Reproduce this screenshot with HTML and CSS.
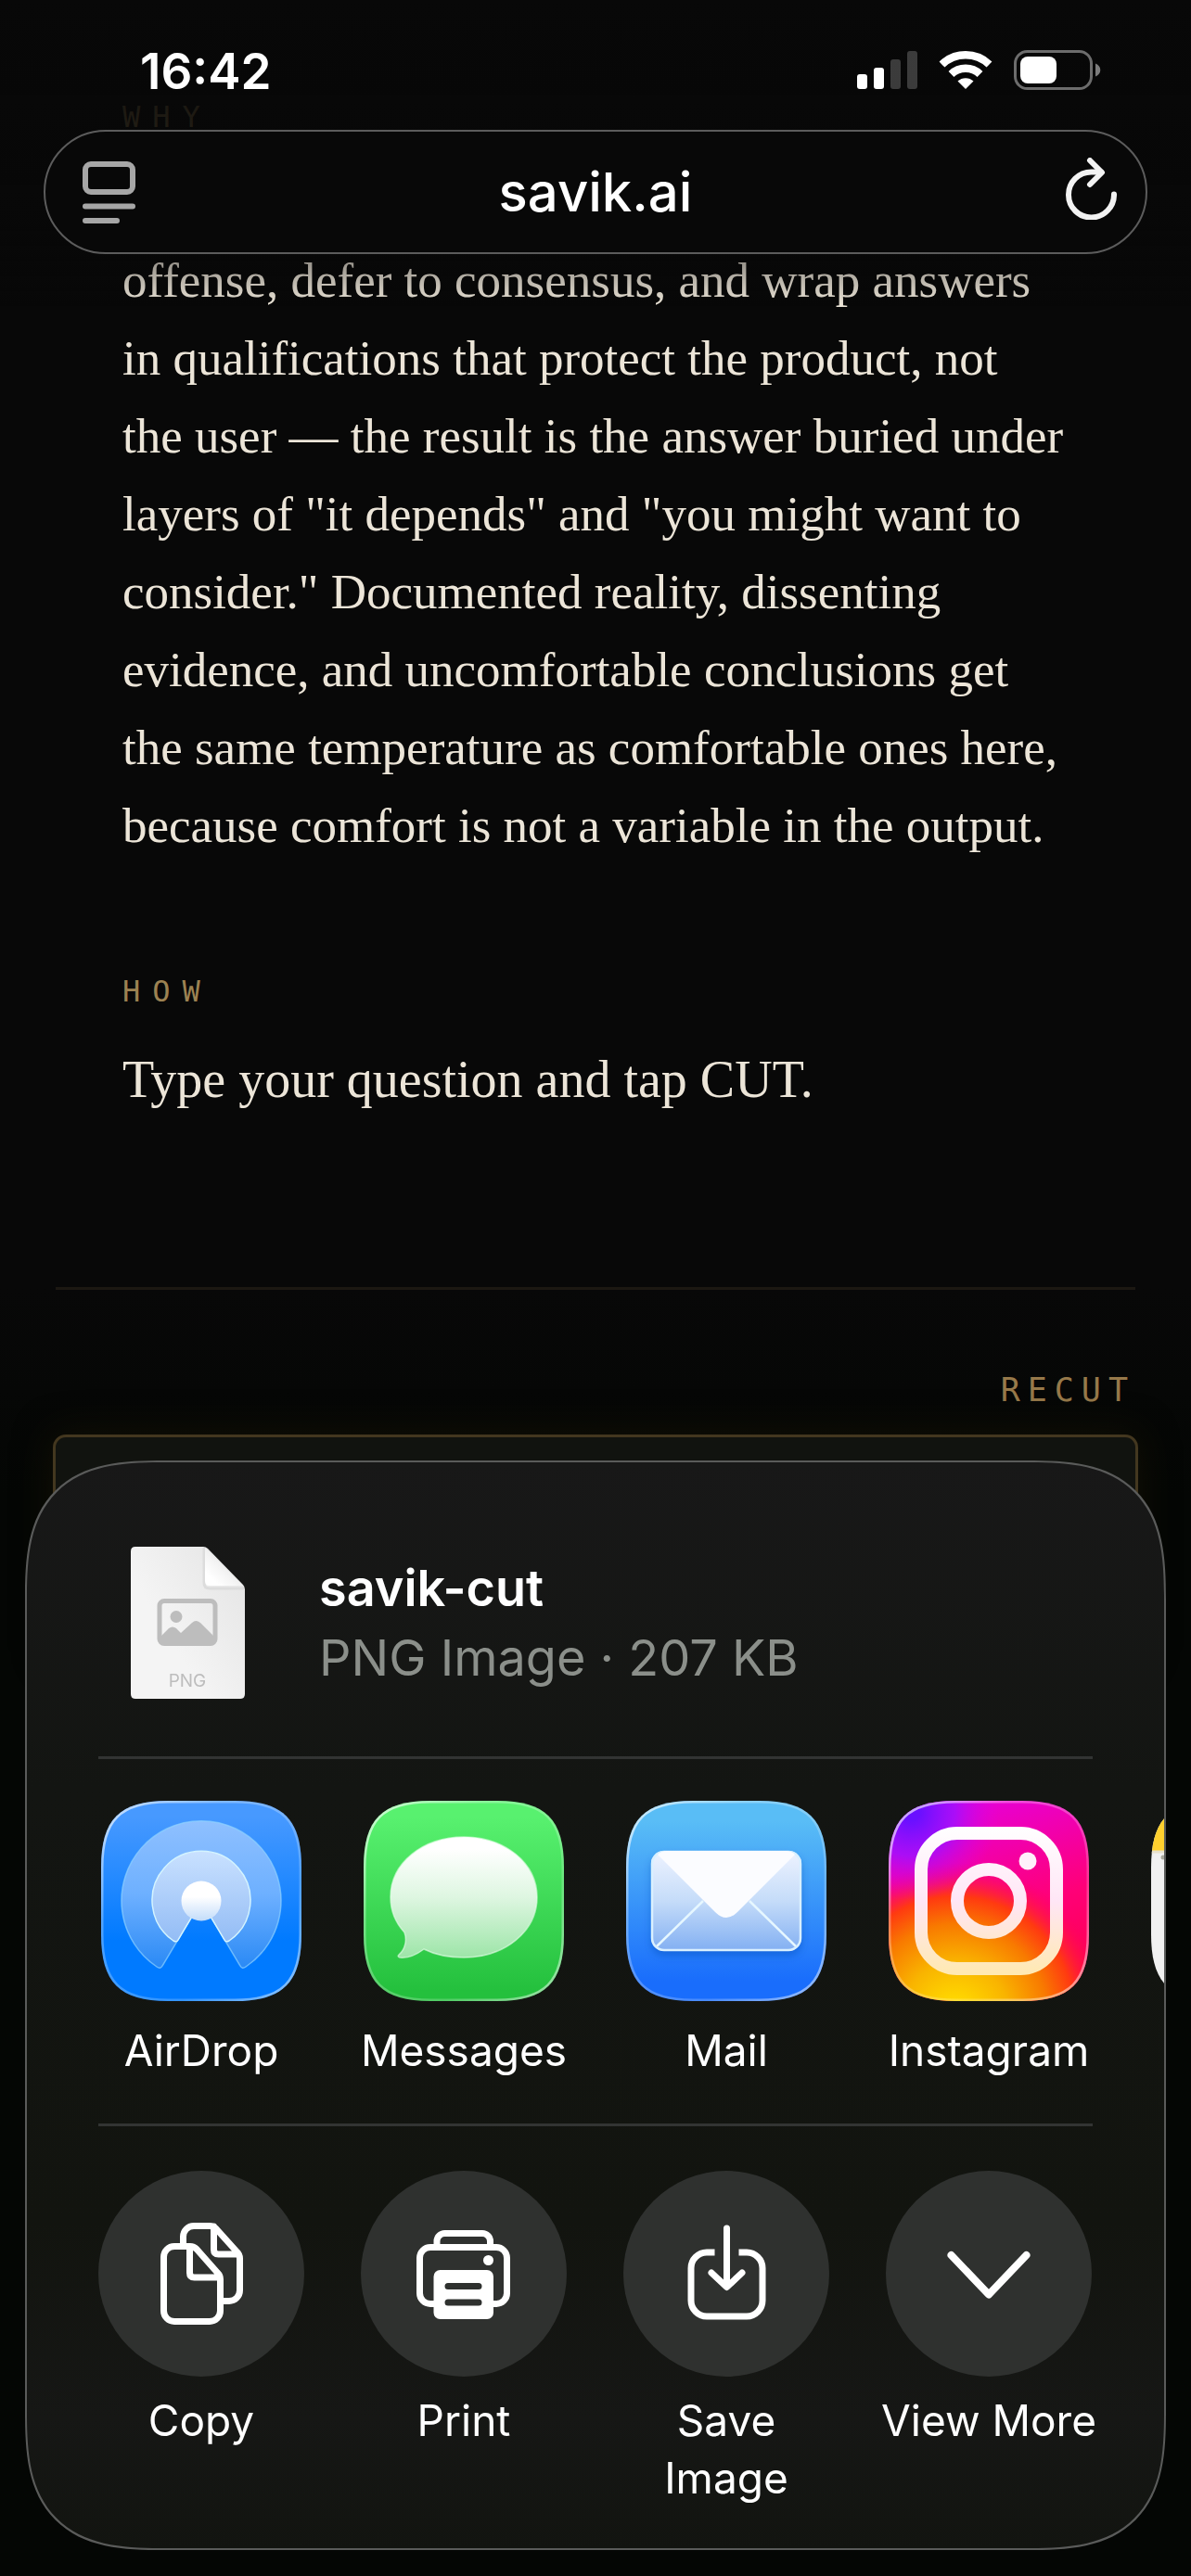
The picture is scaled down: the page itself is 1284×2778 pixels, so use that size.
FILE: index.html
```html
<!DOCTYPE html>
<html lang="en">
<head>
<meta charset="utf-8">
<meta name="viewport" content="width=device-width">
<title>savik.ai</title>
<link rel="stylesheet" href="styles.css">
</head>
<body>
<header class="top">
  <div class="status">
    <span class="time">16:42</span>
    <div class="status-icons">
      <svg width="65" height="43" viewBox="0 0 65 43" fill="#fff" aria-hidden="true">
        <rect x="0" y="26" width="11" height="16" rx="3"/>
        <rect x="18" y="19" width="11" height="23" rx="3"/>
        <rect x="36" y="10" width="11" height="32" rx="3" opacity=".21"/>
        <rect x="54" y="1" width="11" height="41" rx="3" opacity=".21"/>
      </svg>
      <svg width="58" height="43" viewBox="0 0 58 43" fill="none" stroke="#fff" aria-hidden="true">
        <path d="M3.500 15.500A37 37 0 0 1 54.500 15.500" stroke-width="8.500"/>
        <path d="M13.500 26A22.500 22.500 0 0 1 44.500 26" stroke-width="8.500"/>
        <path d="M29 42L20.500 33.500A12.500 12.500 0 0 1 37.500 33.500Z" fill="#fff" stroke="none"/>
      </svg>
      <svg width="94" height="43" viewBox="0 0 94 43" aria-hidden="true">
        <rect x="1.500" y="1.500" width="82" height="40" rx="13" fill="none" stroke="#6c6c6c" stroke-width="3"/>
        <rect x="7" y="7" width="39" height="29" rx="8" fill="#fff"/>
        <path d="M88 14.500C95 17 95 26 88 28.500Z" fill="#7c7c7c"/>
      </svg>
    </div>
  </div>
  <div class="address">
    <button class="bar-button" type="button" aria-label="Page menu">
      <svg width="57" height="67" viewBox="0 0 57 67" fill="none" stroke="#a6a6a6" stroke-width="6" stroke-linecap="round" aria-hidden="true">
        <rect x="3" y="3" width="51" height="30" rx="6"/>
        <path d="M3 48.500H54M3 64H37"/>
      </svg>
    </button>
    <input class="url" type="text" value="savik.ai" aria-label="Address">
    <button class="bar-button reload" type="button" aria-label="Reload">
      <svg width="55" height="67" viewBox="0 0 55 67" fill="none" stroke="#f2f2f2" stroke-width="6" stroke-linecap="round" stroke-linejoin="round" aria-hidden="true">
        <path d="M52 39.500A24.500 24.500 0 1 1 27.500 15.500H38"/>
        <path d="M26 3L39 16L26 29"/>
      </svg>
    </button>
  </div>
</header>

<main class="page">
  <article class="article">
    <h2 class="label">WHY</h2>
    <p class="why">offense, defer to consensus, and wrap answers<br>in qualifications that protect the product, not<br>the user — the result is the answer buried under<br>layers of "it depends" and "you might want to<br>consider." Documented reality, dissenting<br>evidence, and uncomfortable conclusions get<br>the same temperature as comfortable ones here,<br>because comfort is not a variable in the output.</p>
    <h2 class="label">HOW</h2>
    <p class="how">Type your question and tap CUT.</p>
  </article>
  <hr class="rule">
  <button class="recut" type="button">RECUT</button>
  <textarea class="question" aria-label="Question"></textarea>
</main>

<section class="sheet" aria-label="Share">
  <div class="file">
    <svg class="file-icon" width="123" height="164" viewBox="0 0 123 164" aria-hidden="true">
      <defs>
        <linearGradient id="paper" x1="0" y1="1" x2="1" y2=".2"><stop offset=".4" stop-color="#f4f4f4"/><stop offset="1" stop-color="#e6e6e6"/></linearGradient>
        <linearGradient id="fold" x1="0" y1="1" x2=".6" y2=".4"><stop offset=".3" stop-color="#fff"/><stop offset="1" stop-color="#ececec"/></linearGradient>
      </defs>
      <path d="M5 0H78Q81 0 83 2L121 41Q123 43 123 46V159Q123 164 118 164H5Q0 164 0 159V5Q0 0 5 0Z" fill="url(#paper)"/>
      <path d="M79 1V39Q79 45 85 45H122" fill="none" stroke="#dcdcdc" stroke-width="3"/>
      <path d="M80 1V37Q80 42 85 42H121Z" fill="url(#fold)"/>
      <rect x="31" y="58.500" width="60" height="46" rx="5" fill="none" stroke="#bdbdbd" stroke-width="5"/>
      <circle cx="49" cy="75.500" r="6.500" fill="#bdbdbd"/>
      <path d="M31 98L41 88Q45 85 49 88L54 93L66 82Q70 78 75 82L91 98V105H31Z" fill="#bdbdbd"/>
      <text x="61" y="151" class="file-kind">PNG</text>
    </svg>
    <div class="file-text">
      <h1 class="file-name">savik-cut</h1>
      <p class="file-meta">PNG Image · 207 KB</p>
    </div>
  </div>
  <hr class="divider">
  <div class="row apps">
    <button class="item" type="button">
      <svg width="216" height="216" viewBox="0 0 216 216" aria-hidden="true">
        <defs>
          <path id="tile" d="M0 72C0 20 20 0 72 0H144C196 0 216 20 216 72V144C216 196 196 216 144 216H72C20 216 0 196 0 144Z"/>
          <clipPath id="tile-clip"><use href="#tile"/></clipPath>
          <linearGradient id="edge" x1="0" y1="0" x2="1" y2="1"><stop offset="0" stop-color="#fff" stop-opacity=".75"/><stop offset=".3" stop-color="#fff" stop-opacity=".3"/><stop offset=".7" stop-color="#fff" stop-opacity=".2"/><stop offset="1" stop-color="#fff" stop-opacity=".6"/></linearGradient>
          <linearGradient id="air" x2="0" y2="1"><stop offset=".08" stop-color="#4799ff"/><stop offset=".7" stop-color="#007aff"/></linearGradient>
          <linearGradient id="air-outer" x2="0" y2="1"><stop offset="0" stop-color="#8fc0ff"/><stop offset=".5" stop-color="#6db0ff"/><stop offset="1" stop-color="#2a89f5"/></linearGradient>
          <linearGradient id="air-inner" x2="0" y2="1"><stop offset="0" stop-color="#c9e1ff"/><stop offset="1" stop-color="#93bcf5"/></linearGradient>
          <linearGradient id="air-dot" x2="0" y2="1"><stop offset=".4" stop-color="#fff"/><stop offset="1" stop-color="#c2dcfa"/></linearGradient>
        </defs>
        <use href="#tile" fill="url(#air)"/>
        <path d="M108 108L150 178Q152 182 156 179A86 86 0 1 0 60 179Q64 182 66 178Z" fill="url(#air-outer)" stroke="#8fd2ff" stroke-opacity=".7" stroke-width="1.500"/>
        <path d="M108 108L133 150Q134.500 153 138 151A53 53 0 1 0 78 151Q81.500 153 83 150Z" fill="url(#air-inner)" stroke="#d4f4ff" stroke-width="1.500"/>
        <circle cx="108" cy="108" r="21.500" fill="url(#air-dot)"/>
        <use href="#tile" fill="none" stroke="url(#edge)" stroke-width="5" clip-path="url(#tile-clip)"/>
      </svg>
      <span class="caption">AirDrop</span>
    </button>
    <button class="item" type="button">
      <svg width="216" height="216" viewBox="0 0 216 216" aria-hidden="true">
        <defs>
          <linearGradient id="msg" x2="0" y2="1"><stop offset=".08" stop-color="#58f16f"/><stop offset=".95" stop-color="#24c03d"/></linearGradient>
          <linearGradient id="bubble" x2="0" y2="1"><stop offset=".1" stop-color="#fff"/><stop offset=".5" stop-color="#def6e1"/><stop offset="1" stop-color="#9de5a8"/></linearGradient>
        </defs>
        <use href="#tile" fill="url(#msg)"/>
        <path d="M108 39C152 39 187 67 187 104S152 169 108 169C92 169 77 166 65 160C57 166 47 170 39 169Q36 168 38 166C45 160 47 150 44 142C34 131 29 118 29 104C29 67 64 39 108 39Z" fill="url(#bubble)" stroke="#eaffed" stroke-opacity=".6" stroke-width="1.500"/>
        <use href="#tile" fill="none" stroke="url(#edge)" stroke-width="5" clip-path="url(#tile-clip)"/>
      </svg>
      <span class="caption">Messages</span>
    </button>
    <button class="item" type="button">
      <svg width="216" height="216" viewBox="0 0 216 216" aria-hidden="true">
        <defs>
          <linearGradient id="mail" x2="0" y2="1"><stop offset=".1" stop-color="#59bdf6"/><stop offset=".9" stop-color="#196dfc"/></linearGradient>
          <linearGradient id="envelope" x2="0" y2="1"><stop offset="0" stop-color="#eef3ff"/><stop offset=".5" stop-color="#c5dcf9"/><stop offset="1" stop-color="#82aff2"/></linearGradient>
          <filter id="soft" x="-20%" y="-20%" width="140%" height="150%"><feDropShadow dx="0" dy="5" stdDeviation="4" flood-color="#0a4cb8" flood-opacity=".45"/></filter>
        </defs>
        <use href="#tile" fill="url(#mail)"/>
        <rect x="27" y="54" width="162" height="108" rx="14" fill="url(#envelope)" filter="url(#soft)"/>
        <path d="M33 157L83 108M183 157L133 108" stroke="#e6f7ff" stroke-width="2.500"/>
        <rect x="28" y="55" width="160" height="106" rx="13" fill="none" stroke="#d9f0ff" stroke-width="2.500"/>
        <path d="M34 58Q38 54 44 54H172Q178 54 182 58L120 120Q108 132 96 120Z" fill="#fbfcff"/>
        <use href="#tile" fill="none" stroke="url(#edge)" stroke-width="5" clip-path="url(#tile-clip)"/>
      </svg>
      <span class="caption">Mail</span>
    </button>
    <button class="item" type="button">
      <svg width="216" height="216" viewBox="0 0 216 216" aria-hidden="true">
        <defs>
          <linearGradient id="insta" x1=".4" y1="0" x2=".7" y2="1"><stop offset="0" stop-color="#e600d8"/><stop offset=".55" stop-color="#ff0078"/><stop offset="1" stop-color="#ff0048"/></linearGradient>
          <radialGradient id="insta-sun" gradientUnits="userSpaceOnUse" cx="72" cy="232" r="165"><stop offset=".1" stop-color="#ffd800"/><stop offset=".35" stop-color="#f9b400"/><stop offset=".6" stop-color="#f87a00"/><stop offset=".78" stop-color="#ff3a10"/><stop offset="1" stop-color="#ff0060" stop-opacity="0"/></radialGradient>
          <radialGradient id="insta-violet" gradientUnits="userSpaceOnUse" cx="24" cy="12" r="95"><stop offset=".1" stop-color="#6a10ff"/><stop offset=".5" stop-color="#a010ff" stop-opacity=".85"/><stop offset="1" stop-color="#e000e0" stop-opacity="0"/></radialGradient>
          <linearGradient id="insta-line" gradientUnits="userSpaceOnUse" x1="0" y1="28" x2="0" y2="188"><stop offset="0" stop-color="#fff"/><stop offset=".5" stop-color="#ffe6f6"/><stop offset="1" stop-color="#ffe9b0"/></linearGradient>
        </defs>
        <use href="#tile" fill="url(#insta)"/>
        <use href="#tile" fill="url(#insta-sun)"/>
        <use href="#tile" fill="url(#insta-violet)"/>
        <g fill="none" stroke="url(#insta-line)" stroke-width="14">
          <rect x="35" y="35" width="146" height="146" rx="39"/>
          <circle cx="108" cy="108" r="34"/>
        </g>
        <circle cx="150" cy="65" r="9.500" fill="#fff0fb"/>
        <use href="#tile" fill="none" stroke="url(#edge)" stroke-width="5" clip-path="url(#tile-clip)"/>
      </svg>
      <span class="caption">Instagram</span>
    </button>
    <button class="item" type="button" aria-label="Notes">
      <svg width="216" height="216" viewBox="0 0 216 216" aria-hidden="true">
        <g clip-path="url(#tile-clip)">
          <rect width="216" height="216" fill="#f1f1f1"/>
          <rect width="216" height="54" fill="#ffd02e"/>
          <path d="M0 55H216" stroke="#e8e2cc" stroke-width="3"/>
          <path d="M13 61H216" stroke="#a8a89c" stroke-width="5" stroke-linecap="round" stroke-dasharray="0 12"/>
        </g>
      </svg>
    </button>
  </div>
  <hr class="divider">
  <div class="row actions">
    <button class="item" type="button">
      <svg class="disc" width="222" height="222" viewBox="0 0 222 222" aria-hidden="true">
        <path d="M99 81.500H82A11.500 11.500 0 0 0 70.500 93V151A11.500 11.500 0 0 0 82 162.500H120A11.500 11.500 0 0 0 131.500 151V117Q131.500 113 128.500 110L106 84.500Q103 81.500 99 81.500ZM98.500 82V110Q98.500 115 103.500 115H130"/>
        <path d="M91.500 78V71A11.500 11.500 0 0 1 103 59.500H120Q124 59.500 127 62.500L149.500 87.500Q152.500 90.500 152.500 94.500V129A11.500 11.500 0 0 1 141 140.500H135M124.500 60V85Q124.500 90 129.500 90H151"/>
      </svg>
      <span class="caption">Copy</span>
    </button>
    <button class="item" type="button">
      <svg class="disc" width="222" height="222" viewBox="0 0 222 222" aria-hidden="true">
        <path d="M82 143.500H75A11.500 11.500 0 0 1 63.500 132V94A11.500 11.500 0 0 1 75 82.500H146A11.500 11.500 0 0 1 157.500 94V132A11.500 11.500 0 0 1 146 143.500H139M82 82V76A8.500 8.500 0 0 1 90.500 67.500H131A8.500 8.500 0 0 1 139.500 76V82"/>
        <rect x="78.500" y="107" width="64.500" height="53" rx="7" fill="#fff" stroke="none"/>
        <circle cx="137.500" cy="96.500" r="5.500" fill="#fff" stroke="none"/>
        <path d="M94 124.500H127M94 142H127" stroke="#2f312f"/>
      </svg>
      <span class="caption">Print</span>
    </button>
    <button class="item" type="button">
      <svg class="disc" width="222" height="222" viewBox="0 0 222 222" aria-hidden="true">
        <path stroke-linecap="butt" d="M98.500 88H90A17 17 0 0 0 73 105V140A17 17 0 0 0 90 157H133A17 17 0 0 0 150 140V105A17 17 0 0 0 133 88H124.500"/>
        <path d="M111.500 62V125M95 110L111.500 125.500L128 110"/>
      </svg>
      <span class="caption">Save<br>Image</span>
    </button>
    <button class="item" type="button">
      <svg class="disc disc-chevron" width="222" height="222" viewBox="0 0 222 222" aria-hidden="true">
        <path d="M70.500 91L111 133.500L151.500 91"/>
      </svg>
      <span class="caption">View More</span>
    </button>
  </div>
</section>
</body>
</html>
```
FILE: styles.css
```css
* { box-sizing: border-box; margin: 0; padding: 0; }

body {
  min-height: 100vh;
  background: linear-gradient(#080808 0, #080808 50%, #040604 58%, #040604 100%);
  color: #ece5d8;
  font-family: Inter, sans-serif;
  overflow-x: hidden;
}

button, input, textarea { font: inherit; color: inherit; background: none; border: 0; outline: 0; }
svg { display: block; flex: none; }

/* Browser chrome, floating over the page */
.top {
  position: fixed;
  inset: 0 0 auto;
  z-index: 1;
  padding-bottom: 60px;
  background: linear-gradient(#080808 0, rgba(8, 8, 8, .86) 120px, rgba(8, 8, 8, .7) 240px, rgba(8, 8, 8, 0) 330px);
}
.status {
  display: flex;
  justify-content: space-between;
  align-items: flex-start;
  height: 140px;
  padding: 47px 97px 0 151px;
}
.time { font-size: 53px; font-weight: 600; line-height: 60px; color: #fff; }
.status-icons { display: flex; gap: 23px; padding-top: 7px; }
.address {
  display: flex;
  align-items: center;
  justify-content: space-between;
  height: 134px;
  margin: 0 47px;
  padding: 0 31px 0 40px;
  border: 2px solid #5c5c5c;
  border-radius: 67px;
  background: #080808;
}
.reload { padding-bottom: 7px; }
.url {
  flex: 1;
  min-width: 0;
  padding-right: 11px;
  text-align: center;
  font-size: 58px;
  font-weight: 500;
  line-height: 76px;
  color: #fff;
}

/* Page */
.page { display: flex; flex-direction: column; padding: 106px 60px 0; }
.article { padding: 0 72px; font-family: "Liberation Serif", serif; white-space: nowrap; }
.label {
  font: 32px/40px "DejaVu Sans Mono", monospace;
  letter-spacing: 13px;
  color: #9c8252;
}
.why { margin: 114px 0 117px; font-size: 53px; line-height: 84px; }
.how { margin: 33px 0 182px; font-size: 56px; line-height: 84px; }
.rule { height: 3px; border: 0; background: #1c1812; }
.recut {
  align-self: flex-end;
  margin: 86px 0 26px;
  font: 35px/44px "DejaVu Sans Mono", monospace;
  letter-spacing: 8px;
  color: #97794a;
}
.question {
  height: 240px;
  margin: 0 -3px;
  border: 3px solid #43371f;
  border-radius: 14px;
  background: #11130f;
  box-shadow: 0 0 40px #131105;
  resize: none;
}

/* Share sheet */
.sheet {
  position: fixed;
  inset: auto 27px 28px;
  z-index: 2;
  overflow: hidden;
  border: 2px solid #5a5b5a;
  border-radius: 116px;
  background: linear-gradient(#181818, #131512 30%, #12140f 70%, #161715 88%, #121410);
  color: #fff;
}
@supports (corner-shape: superellipse(1.5)) {
  .sheet { border-radius: 150px; corner-shape: superellipse(1.5); }
}
.file { display: flex; align-items: center; gap: 80px; padding: 91px 112px 62px; }
.file-kind { font-size: 19px; fill: #bdbdbd; text-anchor: middle; }
.file-name { font-size: 54px; line-height: 75px; font-weight: 600; }
.file-meta { font-size: 54px; line-height: 75px; color: #8b8f8a; }
.divider { height: 3px; margin: 0 77px; border: 0; background: #323433; }
.row { display: flex; gap: 61px; padding: 0 77px; }
.apps { padding-top: 45px; padding-bottom: 48px; }
.actions { padding-top: 48px; padding-bottom: 45px; }
.item { display: flex; flex: 0 0 222px; min-width: 0; flex-direction: column; align-items: center; gap: 22px; }
.actions .item { gap: 16px; }
.caption { font-size: 46px; line-height: 62px; white-space: nowrap; }
.disc {
  border-radius: 50%;
  background: #2f312f;
  fill: none;
  stroke: #fff;
  stroke-width: 7px;
  stroke-linecap: round;
  stroke-linejoin: round;
}
.disc-chevron { stroke-width: 8px; }
```
